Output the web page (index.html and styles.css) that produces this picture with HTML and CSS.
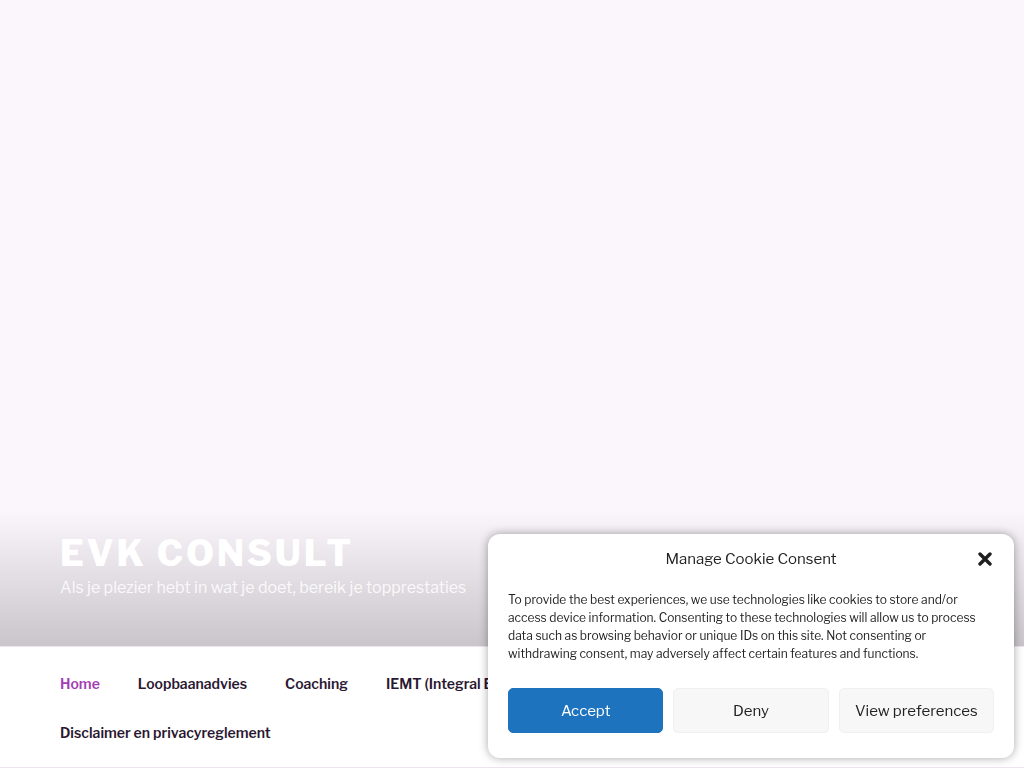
FILE: index.html
```html
<!DOCTYPE html>
<html lang="nl">
<head>
  <meta charset="UTF-8" />
  <meta name="viewport" content="width=device-width, initial-scale=1.0" />
  <title>EVK Consult</title>
  <link rel="stylesheet" href="styles.css">
</head>
<body>
  <header class="site-header">
    <div class="site-branding">
      <h1 class="site-title">EVK Consult</h1>
      <p class="site-description">Als je plezier hebt in wat je doet, bereik je topprestaties</p>
    </div>
  </header>

  <nav class="main-nav">
    <ul class="menu">
      <li class="current"><a href="#">Home</a></li>
      <li><a href="#">Loopbaanadvies</a></li>
      <li><a href="#">Coaching</a></li>
      <li><a href="#">IEMT (Integral Eye Movement Therapy)</a></li>
      <li><a href="#">Contact</a></li>
      <li><a href="#">Disclaimer en privacyreglement</a></li>
    </ul>
  </nav>

  <div class="cookie-banner">
    <div class="cookie-header">
      <span class="cookie-title">Manage Cookie Consent</span>
      <button class="cookie-close" aria-label="Sluiten">
        <svg width="16" height="16" viewBox="0 0 16 16"><path d="M3 3 L13 13 M13 3 L3 13" stroke="#1f1f1f" stroke-width="3.4" stroke-linecap="round"/></svg>
      </button>
    </div>
    <p class="cookie-text">To provide the best experiences, we use technologies like cookies to store and/or access device information. Consenting to these technologies will allow us to process data such as browsing behavior or unique IDs on this site. Not consenting or withdrawing consent, may adversely affect certain features and functions.</p>
    <div class="cookie-buttons">
      <button class="btn btn-accept">Accept</button>
      <button class="btn">Deny</button>
      <button class="btn">View preferences</button>
    </div>
  </div>
</body>
</html>
```

FILE: styles.css
```css
body, html {
  margin: 0;
  font-family: "Libre Franklin", Inter, "Liberation Sans", sans-serif;
}
.site-header {
  height: 647px;
  box-sizing: border-box;
  background: linear-gradient(to bottom, rgba(0, 0, 0, 0) 79%, rgba(0, 0, 0, 0.2) 100%), #fbf6fc;
  display: flex;
  flex-direction: column;
  justify-content: flex-end;
  border-bottom: 1px solid #eee3f0;
}
.site-branding {
  padding: 0 60px 47px;
  color: #fff;
}
.site-title {
  margin: 0;
  font-size: 36px;
  line-height: 40px;
  font-weight: 800;
  letter-spacing: 0.08em;
  text-transform: uppercase;
}
.site-description {
  margin: 4px 0 0;
  font-size: 16px;
  line-height: 22px;
  opacity: 0.85;
}
.main-nav {
  background: #fff;
  height: 120px;
  border-bottom: 1px solid #efe3f1;
}
.menu {
  list-style: none;
  margin: 0;
  padding: 12px 41px 0;
  display: flex;
  flex-wrap: wrap;
  width: 780px;
}
.menu li a {
  display: block;
  padding: 15px 19px;
  font-size: 14px;
  line-height: 19px;
  font-weight: 600;
  color: #2a1731;
  text-decoration: none;
}
.menu li.current a {
  color: #a43bb4;
}
.cookie-banner {
  position: fixed;
  right: 10px;
  bottom: 10px;
  width: 526px;
  box-sizing: border-box;
  background: #fff;
  border-radius: 12px;
  box-shadow: 0 0 10px rgba(0, 0, 0, 0.35);
  padding: 14px 20px 25px;
  color: #222;
}
.cookie-header {
  display: flex;
  align-items: center;
  justify-content: center;
  position: relative;
  height: 22px;
}
.cookie-title {
  font-size: 15px;
}
.cookie-close {
  position: absolute;
  right: 1px;
  top: 3px;
  border: none;
  background: none;
  padding: 0;
  width: 16px;
  height: 16px;
  cursor: pointer;
}
.cookie-text {
  margin: 21px 0 25px;
  font-size: 12px;
  line-height: 18px;
}
.cookie-buttons {
  display: flex;
  gap: 10px;
}
.btn {
  flex: 1;
  height: 45px;
  border: 1px solid #f0f0f0;
  border-radius: 5px;
  background: #f7f7f7;
  color: #222;
  font-family: inherit;
  font-size: 15px;
  cursor: pointer;
}
.btn-accept {
  background: #1e73be;
  border-color: #1e73be;
  color: #fff;
}
```
